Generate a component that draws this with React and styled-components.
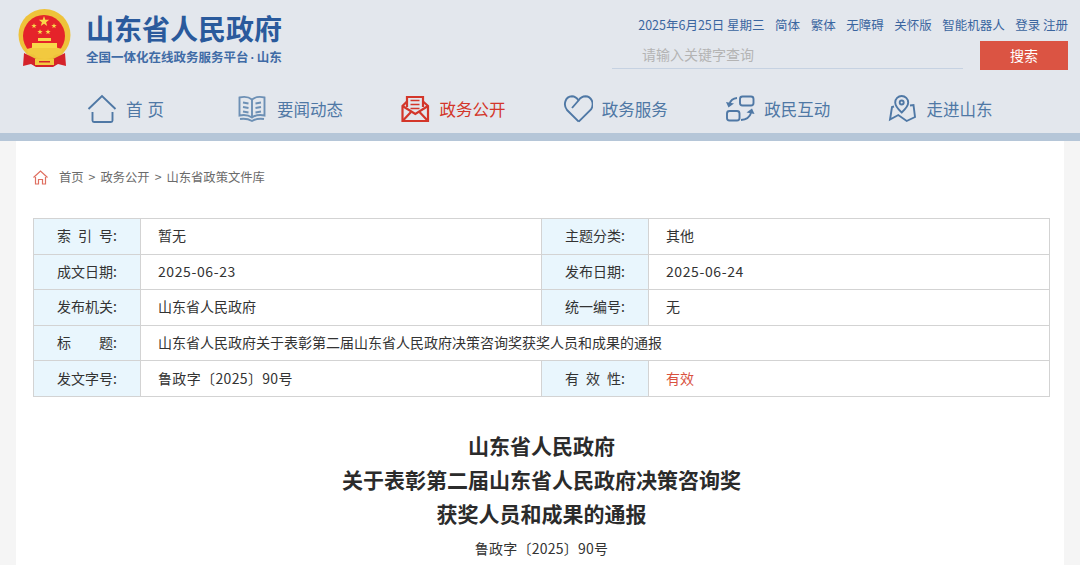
import React from 'react';
import styled, { createGlobalStyle } from 'styled-components';

const Global = createGlobalStyle`
    html, body {
        margin: 0;
        padding: 0;
        height: 565px;
        overflow: hidden;
        background: #f5f5f5;
        font-family: "Noto Sans CJK SC", "Liberation Sans", sans-serif;
    }
`

const Header = styled.header`
    height: 133px;
    background: #e3e7ed;
    border-bottom: 8px solid #b5c6d8;
`

const TopRow = styled.div`
    display: flex;
    justify-content: space-between;
    height: 85px;
    padding: 9px 12px 0 17px;
    box-sizing: border-box;
`

const Brand = styled.div`
    display: flex;
    gap: 13px;
`

const BrandText = styled.div`
    display: flex;
    flex-direction: column;
`

const Title = styled.div`
    font-size: 28px;
    line-height: 38px;
    font-weight: 700;
    color: #2a5a9c;
    white-space: nowrap;
`

const Subtitle = styled.div`
    font-size: 12.5px;
    line-height: 18px;
    margin-top: 1px;
    font-weight: 700;
    color: #3f6ba6;
    white-space: nowrap;
`

const Dot = styled.span`
    font-family: "Liberation Sans", sans-serif;
    margin: 0 2px;
`

const Tools = styled.div`
    display: flex;
    flex-direction: column;
    align-items: flex-end;
`

const ToolLinks = styled.div`
    display: flex;
    gap: 10.5px;
    height: 32px;
    box-sizing: border-box;
    align-items: center;
    padding-bottom: 2px;
    font-size: 12.5px;
    color: #3a659f;
    white-space: nowrap;
`

const SearchRow = styled.div`
    display: flex;
    gap: 17px;
    align-items: flex-start;
`

const SearchInput = styled.div`
    width: 351px;
    height: 28px;
    box-sizing: border-box;
    padding-left: 30px;
    border-bottom: 1px solid #c6d2e2;
    font-size: 14px;
    line-height: 26px;
    color: #b4b4b4;
`

const SearchButton = styled.button`
    width: 88px;
    height: 29px;
    border: 0;
    padding: 0 0 2px;
    background: #db5443;
    color: #fff;
    font: inherit;
    font-size: 14px;
`

const Nav = styled.nav`
    display: grid;
    grid-template-columns: 151px repeat(5, 162.4px);
    padding-left: 87px;
    height: 48px;
`

const NavItem = styled.a`
    display: flex;
    align-items: center;
    height: 48px;
    gap: 9px;
    font-size: 16.5px;
    letter-spacing: ${p => p.$wide ? '5px' : '0'};
    color: ${p => p.$active ? '#d3362a' : '#4f78a5'};
    white-space: nowrap;
`

const Main = styled.main`
    margin: 0 16px;
    padding: 0 14px 0 17px;
    background: #fff;
    height: 424px;
    overflow: hidden;
`

const Crumbs = styled.div`
    display: flex;
    align-items: center;
    height: 77px;
    box-sizing: border-box;
    padding-bottom: 5px;
    font-size: 12.3px;
    color: #6b6b6b;
    white-space: nowrap;
`

const CrumbIcon = styled.svg`
    margin-right: 11px;
`

const CrumbSep = styled.span`
    margin: 0 5px;
`

const InfoTable = styled.table`
    border-collapse: collapse;
    table-layout: fixed;
    width: 1017px;
    font-size: 14px;
    color: #333;
`

const Label = styled.td`
    width: 107px;
    height: 35.6px;
    padding: 0 0 2px;
    box-sizing: border-box;
    border: 1px solid #d3d3d3;
    background: #e9f6fd;
    text-align: center;
`

const Value = styled.td`
    padding: 0 0 2px 17px;
    height: 35.6px;
    box-sizing: border-box;
    border: 1px solid #d3d3d3;
    letter-spacing: ${p => p.$spacing || 0};
    color: ${p => p.$red ? '#d9523f' : '#333'};
`

const Heading = styled.h1`
    margin: 31px 0 0;
    text-align: center;
    font-size: 21px;
    line-height: 34px;
    font-weight: 700;
    color: #2b2b2b;
`

const DocNo = styled.div`
    margin-top: 7px;
    text-align: center;
    font-size: 14px;
    line-height: 22px;
    letter-spacing: 0.25px;
    color: #333;
`

function Emblem() {
    const star = (x, y, r) => {
        let pts = [];
        for (let i = 0; i < 10; i++) {
            let a = -Math.PI / 2 + i * Math.PI / 5,
                d = i % 2 ? r * 0.4 : r;
            pts.push(`${(x + d * Math.cos(a)).toFixed(1)},${(y + d * Math.sin(a)).toFixed(1)}`);
        }
        return <polygon points={pts.join(' ')} fill="#f8d84a" />;
    };
    return <svg width="56" height="60" viewBox="0 0 56 60">
        <circle cx="27.5" cy="26" r="26" fill="#eec23a" />
        <circle cx="27" cy="27" r="21" fill="#e5232a" />
        <path d="M7 44 L6 57 L14 55 L19 58 L36 58 L41 55 L49 57 L48 44 L36 50 H19 Z" fill="#d5232a" />
        <path d="M10 40 Q16 38 20 38 H35 Q39 38 45 40 L44 46 Q38 44 36 48 Q28 52 19 48 Q17 44 11 46 Z" fill="#f2c93f" />
        <rect x="18" y="50" width="19" height="6" fill="#f2c93f" />
        <rect x="22" y="52" width="11" height="1.5" fill="#d5232a" />
        <rect x="21" y="29" width="13" height="3" fill="#f8d84a" />
        <rect x="19" y="32" width="17" height="2" fill="#e5232a" />
        <rect x="15" y="34" width="25" height="5" fill="#f8d84a" />
        {star(27, 12.5, 5.5)}
        {star(17, 17, 2.8)}
        {star(37, 17, 2.8)}
        {star(23, 23, 2.8)}
        {star(31, 23, 2.8)}
    </svg>;
}

const icons = {
    home: <g>
        <path d="M1.5 15 L15 2 L28.5 15" />
        <path d="M5.5 18 V26.5 Q5.5 28 7 28 H24 Q25.5 28 25.5 26.5 V18" />
    </g>,
    book: <g stroke="#6d90b5">
        <path d="M1.5 3.5 Q9 1.5 14 5.5 Q19 1.5 26.5 3.5 V21.5 Q19 20 14 23.5 Q9 20 1.5 21.5 Z" />
        <path d="M14 5.5 V23.5" />
        <path d="M5 8.5 L10.5 9.5 M5 13 L10.5 14 M5 17.5 L10.5 18.5 M17.5 9.5 L23 8.5 M17.5 14 L23 13 M17.5 18.5 L23 17.5" />
        <path d="M2 25 Q9 24 14 27 Q19 24 26 25" />
    </g>,
    mail: <g strokeWidth="2.2">
        <path d="M7 13 V3 H23 V13" />
        <path d="M10.5 6.5 H19.5 M10.5 10.5 H19.5 M10.5 14.5 H19.5" strokeWidth="1.6" />
        <path d="M7 7.5 L2.5 12 V27 H28 V12 L23 7.5" />
        <path d="M2.5 12 L15.3 20 L28 12" />
        <path d="M3 26.5 L11 18 M27.5 26.5 L19.5 18" />
    </g>,
    heart: <g>
        <path d="M15.7 27.7 L4 16 C0 11 2 2.5 9 2.3 C11.5 2.3 13.5 3.5 15.5 6.5" />
        <path d="M9 14 L15.5 6.5 C17.5 3.5 20 2.3 22.5 2.3 C28 2.5 32 9 28 15.5 L15.7 27.7" />
    </g>,
    swap: <g>
        <rect x="15" y="2.5" width="13.5" height="9" rx="2.5" />
        <rect x="2" y="17" width="12.5" height="9.5" rx="2.5" />
        <path d="M12 4 Q6 4.5 4.5 10" />
        <polygon points="1,8 9,9.5 3.5,13.5" fill="#4f78a5" stroke="none" />
        <path d="M16 26 Q24 25.5 26 19" />
        <polygon points="29.5,20 21.5,18.5 27,14.5" fill="#4f78a5" stroke="none" />
    </g>,
    map: <g>
        <path d="M13.7 18.5 Q7.2 12.5 7.2 8.5 A6.5 6.5 0 0 1 20.2 8.5 Q20.2 12.5 13.7 18.5 Z" />
        <circle cx="13.7" cy="8.5" r="2" />
        <path d="M6 12.5 L4 13 L2 25.5 L10.3 21 L18.7 27 L27 23 L25.5 11 L22 11.5" />
    </g>,
};

const navItems = [
    { text: '首页', icon: 'home', wide: true },
    { text: '要闻动态', icon: 'book' },
    { text: '政务公开', icon: 'mail', active: true },
    { text: '政务服务', icon: 'heart' },
    { text: '政民互动', icon: 'swap' },
    { text: '走进山东', icon: 'map' },
];

const toolLinks = ['2025年6月25日 星期三', '简体', '繁体', '无障碍', '关怀版', '智能机器人', '登录 注册'];

export default class App extends React.Component {

    render() {
        return <React.Fragment>
            <Global />
            <Header>
                <TopRow>
                    <Brand>
                        <Emblem />
                        <BrandText>
                            <Title>山东省人民政府</Title>
                            <Subtitle>全国一体化在线政务服务平台<Dot>·</Dot>山东</Subtitle>
                        </BrandText>
                    </Brand>
                    <Tools>
                        <ToolLinks>
                            {toolLinks.map(t => <span key={t}>{t}</span>)}
                        </ToolLinks>
                        <SearchRow>
                            <SearchInput>请输入关键字查询</SearchInput>
                            <SearchButton>搜索</SearchButton>
                        </SearchRow>
                    </Tools>
                </TopRow>
                <Nav>
                    {navItems.map(({ text, icon, wide, active }) =>
                        <NavItem key={text} $wide={wide} $active={active}>
                            <svg width="30" height="30" viewBox="0 0 30 30" fill="none"
                                stroke={active ? '#d3362a' : '#4f78a5'} strokeWidth="1.9">
                                {icons[icon]}
                            </svg>
                            <span>{text}</span>
                        </NavItem>
                    )}
                </Nav>
            </Header>
            <Main>
                <Crumbs>
                    <CrumbIcon width="15" height="15" viewBox="0 0 15 15" fill="none" stroke="#df6f60" strokeWidth="1.2">
                        <path d="M0.5 7.5 L7.5 1 L14.5 7.5" />
                        <path d="M2.5 7 V14 H5.5 V9.5 H9.5 V14 H12.5 V7" />
                    </CrumbIcon>
                    首页<CrumbSep>&gt;</CrumbSep>政务公开<CrumbSep>&gt;</CrumbSep>山东省政策文件库
                </Crumbs>
                <InfoTable>
                    <tbody>
                        <tr>
                            <Label>索&ensp;引&ensp;号:</Label>
                            <Value>暂无</Value>
                            <Label>主题分类:</Label>
                            <Value>其他</Value>
                        </tr>
                        <tr>
                            <Label>成文日期:</Label>
                            <Value $spacing="0.6px">2025-06-23</Value>
                            <Label>发布日期:</Label>
                            <Value $spacing="0.6px">2025-06-24</Value>
                        </tr>
                        <tr>
                            <Label>发布机关:</Label>
                            <Value>山东省人民政府</Value>
                            <Label>统一编号:</Label>
                            <Value>无</Value>
                        </tr>
                        <tr>
                            <Label>标&emsp;&emsp;题:</Label>
                            <Value colSpan={3}>山东省人民政府关于表彰第二届山东省人民政府决策咨询奖获奖人员和成果的通报</Value>
                        </tr>
                        <tr>
                            <Label>发文字号:</Label>
                            <Value $spacing="0.35px">鲁政字〔2025〕90号</Value>
                            <Label>有&ensp;效&ensp;性:</Label>
                            <Value $red>有效</Value>
                        </tr>
                    </tbody>
                </InfoTable>
                <Heading>
                    山东省人民政府<br />
                    关于表彰第二届山东省人民政府决策咨询奖<br />
                    获奖人员和成果的通报
                </Heading>
                <DocNo>鲁政字〔2025〕90号</DocNo>
            </Main>
        </React.Fragment>;
    }
}
